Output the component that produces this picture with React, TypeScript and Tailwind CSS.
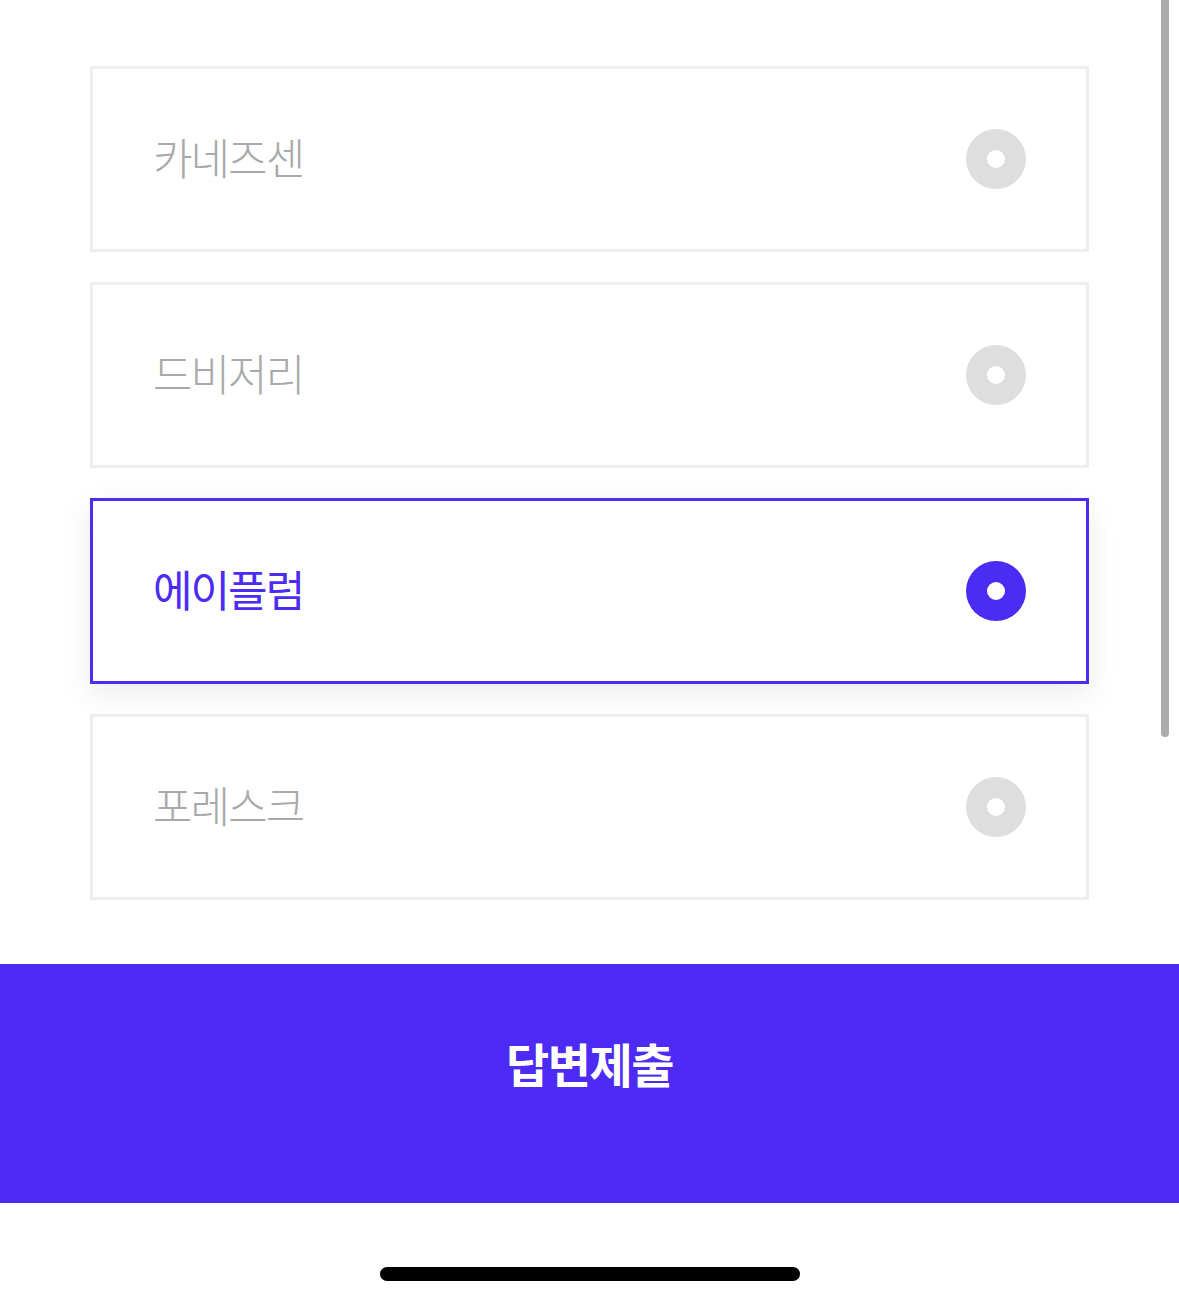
import { useState } from "react";

const options = ["카네즈센", "드비저리", "에이플럼", "포레스크"];

function Radio({ on }: { on: boolean }) {
  return (
    <span
      className={
        "flex h-[60px] w-[60px] shrink-0 items-center justify-center rounded-full " +
        (on ? "bg-[#4b2cf3]" : "bg-[#dedede]")
      }
    >
      <span className="h-[18px] w-[18px] rounded-full bg-white" />
    </span>
  );
}

export default function App() {
  const [picked, setPicked] = useState(2);

  return (
    <div
      className="relative flex h-[1306px] w-[1179px] flex-col overflow-hidden bg-white"
      style={{ fontFamily: '"Noto Sans CJK KR", "Noto Sans", sans-serif' }}
    >
      {/* scroll indicator */}
      <div className="absolute right-[10px] top-0 h-[737px] w-[8px] rounded-b-full bg-[#acacac]" />

      <ul className="flex flex-col gap-[30px] px-[90px] pt-[66px]">
        {options.map((label, i) => {
          const on = picked === i;
          return (
            <li key={label}>
              <button
                type="button"
                onClick={() => setPicked(i)}
                className={
                  "flex h-[186px] w-full items-center justify-between border-[3px] bg-white px-[60px] " +
                  (on
                    ? "border-[#4b2cf3] shadow-[0_10px_30px_rgba(0,0,0,0.08)]"
                    : "border-[#eeeeee]")
                }
              >
                <span
                  className={
                    "-mt-[6px] text-[43px] leading-none tracking-[-2px] " +
                    (on ? "font-normal text-[#4b2cf3]" : "font-light text-[#a9a9a9]")
                  }
                >
                  {label}
                </span>
                <Radio on={on} />
              </button>
            </li>
          );
        })}
      </ul>

      <button
        type="button"
        className="mt-[64px] flex h-[239px] w-full items-center justify-center bg-[#4d2bf5] pb-[40px] text-[47px] font-bold tracking-[-1.5px] text-white"
      >
        답변제출
      </button>

      <div className="flex flex-1 items-start justify-center pt-[64px]">
        <div className="h-[14px] w-[420px] rounded-full bg-black" />
      </div>
    </div>
  );
}
